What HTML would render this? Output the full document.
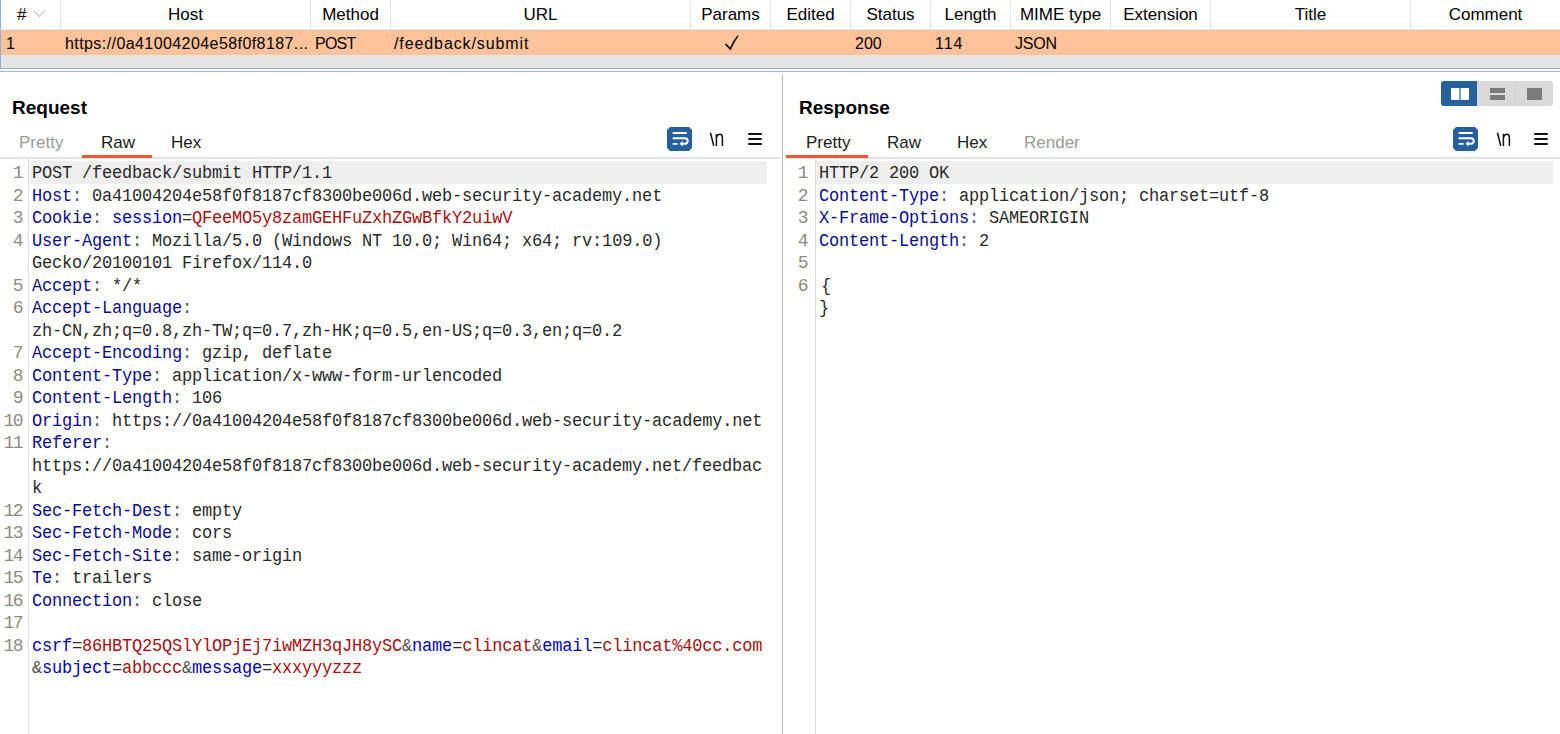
<!DOCTYPE html>
<html><head><meta charset="utf-8">
<style>
*{margin:0;padding:0;box-sizing:border-box}
html,body{width:1560px;height:734px;overflow:hidden;background:#fff;font-family:"Liberation Sans",sans-serif;color:#000}
.abs{position:absolute}
#tbl{position:absolute;left:0;top:0;width:1560px;height:69px;border-left:1px solid #8fb0d8;border-bottom:1px solid #8fb0d8}
.hd{position:absolute;top:0;height:30px;font-size:17px;line-height:29px;text-align:center;white-space:nowrap}
.sep{position:absolute;top:0;height:30px;width:1px;background:#e4e4e4}
#row{position:absolute;left:1px;top:30px;width:1559px;height:25px;background:#fec39a}
#gray{position:absolute;left:1px;top:55px;width:1559px;height:13px;background:#e5e5e5}
.cell{position:absolute;top:31px;height:25px;font-size:16px;line-height:25px;white-space:nowrap;letter-spacing:0}
#hline{position:absolute;left:0;top:71px;width:1560px;height:1px;background:#bab3b3}
#vdiv{position:absolute;left:782px;top:75px;width:1px;height:659px;background:#b8b1b1}
.title{position:absolute;font-size:19px;font-weight:bold;line-height:22px}
.tab{position:absolute;top:132px;font-size:17px;line-height:22px;color:#1c1c1c}
.tab.dis{color:#9a9a9a}
.uline{position:absolute;top:155px;height:3px;background:#f4572d}
.tabbar{position:absolute;top:157px;height:2px;background:#e1e4e7}
.gutline{position:absolute;top:159px;width:1px;height:575px;background:#dcdcdc}
.curline{position:absolute;top:161px;height:23px;background:#efefef}
.code{position:absolute;top:161px;font-family:"Liberation Mono",monospace;font-size:17px;letter-spacing:-0.2px;line-height:22.5px;color:#2a2a2a}
.code div{height:22.5px;padding-top:1.5px;white-space:pre;transform:scaleY(1.07);transform-origin:0 17px}
.ln{position:absolute;top:161px;font-family:"Liberation Mono",monospace;font-size:18px;letter-spacing:-0.8px;line-height:22.5px;color:#918a80;text-align:right;letter-spacing:-1.6px}
.ln div{height:22.5px;padding-top:1px;white-space:pre}
.k{color:#0c0c86}
.b{color:#0000c0}
.r{color:#a50f0f}
.g{color:#555}
.wrapic{position:absolute;top:127px;width:25px;height:24px;background:#26609c;clip-path:polygon(3px 0,22px 0,25px 3px,25px 21px,22px 24px,3px 24px,0 21px,0 3px)}
.nl{position:absolute;top:128px;font-size:17px;line-height:22px;color:#111}
.hamb{position:absolute;top:133px;width:14px;height:12px}
.hamb i{position:absolute;left:0;width:14px;height:2px;background:#111;border-radius:1px}
</style></head><body>

<div id="tbl"></div>
<div id="row"></div>
<div id="gray"></div>
<div class="abs" style="left:0;top:29px;width:1560px;height:1px;background:#e8e8e8"></div>
<!-- header separators -->
<div class="sep" style="left:60px"></div>
<div class="sep" style="left:310px"></div>
<div class="sep" style="left:390px"></div>
<div class="sep" style="left:690px"></div>
<div class="sep" style="left:770px"></div>
<div class="sep" style="left:850px"></div>
<div class="sep" style="left:930px"></div>
<div class="sep" style="left:1010px"></div>
<div class="sep" style="left:1110px"></div>
<div class="sep" style="left:1210px"></div>
<div class="sep" style="left:1410px"></div>
<!-- headers -->
<div class="hd" style="left:1px;width:59px;text-align:left;padding-left:16px">#<svg style="position:absolute;left:32px;top:10px" width="13" height="8" viewBox="0 0 13 8"><path d="M0.8 1 L6.2 6.4 L11.6 1" stroke="#a0a0a0" stroke-width="1" fill="none"/></svg></div>
<div class="hd" style="left:61px;width:249px">Host</div>
<div class="hd" style="left:311px;width:79px">Method</div>
<div class="hd" style="left:391px;width:299px">URL</div>
<div class="hd" style="left:691px;width:79px">Params</div>
<div class="hd" style="left:771px;width:79px">Edited</div>
<div class="hd" style="left:851px;width:79px">Status</div>
<div class="hd" style="left:931px;width:79px">Length</div>
<div class="hd" style="left:1011px;width:99px">MIME type</div>
<div class="hd" style="left:1111px;width:99px">Extension</div>
<div class="hd" style="left:1211px;width:199px">Title</div>
<div class="hd" style="left:1411px;width:149px">Comment</div>
<!-- row cells -->
<div class="cell" style="left:6px">1</div>
<div class="cell" style="left:65px;letter-spacing:0.42px">https://0a41004204e58f0f8187...</div>
<div class="cell" style="left:315px;letter-spacing:-0.75px">POST</div>
<div class="cell" style="left:394px;letter-spacing:0.9px">/feedback/submit</div>
<svg class="abs" style="left:724px;top:35px" width="16" height="17" viewBox="0 0 16 17"><path d="M0.8 9.4 L2.3 8.4 L6.1 12.6 Q9 5.2 13.6 0.3 L14.6 1.2 Q10.4 6.6 6.6 15.6 Z" fill="#111"/></svg>
<div class="cell" style="left:855px">200</div>
<div class="cell" style="left:935px;letter-spacing:1px">114</div>
<div class="cell" style="left:1015px;letter-spacing:-0.2px">JSON</div>

<div id="hline"></div>
<div id="vdiv"></div>

<!-- REQUEST PANE -->
<div class="title" style="left:12px;top:97px">Request</div>
<div class="tab dis" style="left:19px">Pretty</div>
<div class="tab" style="left:101px">Raw</div>
<div class="tab" style="left:171px">Hex</div>
<div class="tabbar" style="left:0;width:780px"></div>
<div class="uline" style="left:82px;width:70px"></div>

<div class="wrapic" style="left:667px"><svg width="25" height="24" viewBox="0 0 25 24"><path d="M6.4 6 H19" stroke="#fff" stroke-width="1.9" stroke-linecap="round"/><path d="M6.4 11.3 H18 A2.7 2.7 0 0 1 18 16.7 H14.5" stroke="#fff" stroke-width="1.9" fill="none" stroke-linecap="round"/><path d="M6.4 16.9 H9.8" stroke="#fff" stroke-width="1.9" stroke-linecap="round"/><path d="M12.6 16.7 L15.6 14 L15.6 19.4 Z" fill="#fff"/></svg></div>
<svg class="abs" style="left:709px;top:131px" width="17" height="17" viewBox="0 0 17 17"><path d="M1.6 2.2 L4.6 14.2" stroke="#111" stroke-width="1.5" fill="none" stroke-linecap="round"/><path d="M7.4 14.4 V3.6 M7.4 6.5 Q8.5 3.3 10.6 3.3 Q13.4 3.3 13.4 7 V14.4" stroke="#111" stroke-width="1.5" fill="none" stroke-linecap="round"/></svg>
<div class="hamb" style="left:748px"><i style="top:0"></i><i style="top:5px"></i><i style="top:10px"></i></div>

<div class="gutline" style="left:28px"></div>
<div class="curline" style="left:30px;width:737px"></div>

<div class="ln" style="left:0;width:22px">
<div>1</div><div>2</div><div>3</div><div>4</div><div> </div><div>5</div><div>6</div><div> </div><div>7</div><div>8</div><div>9</div><div>10</div><div>11</div><div> </div><div> </div><div>12</div><div>13</div><div>14</div><div>15</div><div>16</div><div>17</div><div>18</div>
</div>
<div class="code" style="left:32px">
<div>POST /feedback/submit HTTP/1.1</div>
<div><span class="k">Host</span><span class="g">:</span> 0a41004204e58f0f8187cf8300be006d.web-security-academy.net</div>
<div><span class="k">Cookie</span><span class="g">:</span> <span class="b">session</span>=<span class="r">QFeeMO5y8zamGEHFuZxhZGwBfkY2uiwV</span></div>
<div><span class="k">User-Agent</span><span class="g">:</span> Mozilla/5.0 (Windows NT 10.0; Win64; x64; rv:109.0)</div>
<div>Gecko/20100101 Firefox/114.0</div>
<div><span class="k">Accept</span><span class="g">:</span> */*</div>
<div><span class="k">Accept-Language</span><span class="g">:</span></div>
<div>zh-CN,zh;q=0.8,zh-TW;q=0.7,zh-HK;q=0.5,en-US;q=0.3,en;q=0.2</div>
<div><span class="k">Accept-Encoding</span><span class="g">:</span> gzip, deflate</div>
<div><span class="k">Content-Type</span><span class="g">:</span> application/x-www-form-urlencoded</div>
<div><span class="k">Content-Length</span><span class="g">:</span> 106</div>
<div><span class="k">Origin</span><span class="g">:</span> https://0a41004204e58f0f8187cf8300be006d.web-security-academy.net</div>
<div><span class="k">Referer</span><span class="g">:</span></div>
<div>https://0a41004204e58f0f8187cf8300be006d.web-security-academy.net/feedbac</div>
<div>k</div>
<div><span class="k">Sec-Fetch-Dest</span><span class="g">:</span> empty</div>
<div><span class="k">Sec-Fetch-Mode</span><span class="g">:</span> cors</div>
<div><span class="k">Sec-Fetch-Site</span><span class="g">:</span> same-origin</div>
<div><span class="k">Te</span><span class="g">:</span> trailers</div>
<div><span class="k">Connection</span><span class="g">:</span> close</div>
<div> </div>
<div><span class="b">csrf</span>=<span class="r">86HBTQ25QSlYlOPjEj7iwMZH3qJH8ySC</span><span class="g">&amp;</span><span class="b">name</span>=<span class="r">clincat</span><span class="g">&amp;</span><span class="b">email</span>=<span class="r">clincat%40cc.com</span></div>
<div><span class="g">&amp;</span><span class="b">subject</span>=<span class="r">abbccc</span><span class="g">&amp;</span><span class="b">message</span>=<span class="r">xxxyyyzzz</span></div>
</div>

<!-- RESPONSE PANE -->
<div class="title" style="left:799px;top:97px">Response</div>
<div class="tab" style="left:806px">Pretty</div>
<div class="tab" style="left:887px">Raw</div>
<div class="tab" style="left:957px">Hex</div>
<div class="tab dis" style="left:1024px">Render</div>
<div class="tabbar" style="left:786px;width:774px"></div>
<div class="uline" style="left:786px;width:82px"></div>

<!-- layout toggles -->
<div class="abs" style="left:1441px;top:81px;width:112px;height:25px;background:#dadada;border-radius:3px;overflow:hidden">
  <div class="abs" style="left:0;top:0;width:36px;height:25px;background:#26619c"></div>
  <div class="abs" style="left:10px;top:7px;width:8px;height:12px;background:#fff"></div>
  <div class="abs" style="left:20px;top:7px;width:8px;height:12px;background:#fff"></div>
  <div class="abs" style="left:18px;top:7px;width:2px;height:12px;background:#7b9dc6"></div>
  <div class="abs" style="left:49px;top:7px;width:15px;height:5px;background:#7b7b7b"></div>
  <div class="abs" style="left:49px;top:14px;width:15px;height:5px;background:#7b7b7b"></div>
  <div class="abs" style="left:74px;top:0;width:1px;height:25px;background:#cfcfcf"></div>
  <div class="abs" style="left:86px;top:7px;width:15px;height:12px;background:#7b7b7b"></div>
</div>

<div class="wrapic" style="left:1453px"><svg width="25" height="24" viewBox="0 0 25 24"><path d="M6.4 6 H19" stroke="#fff" stroke-width="1.9" stroke-linecap="round"/><path d="M6.4 11.3 H18 A2.7 2.7 0 0 1 18 16.7 H14.5" stroke="#fff" stroke-width="1.9" fill="none" stroke-linecap="round"/><path d="M6.4 16.9 H9.8" stroke="#fff" stroke-width="1.9" stroke-linecap="round"/><path d="M12.6 16.7 L15.6 14 L15.6 19.4 Z" fill="#fff"/></svg></div>
<svg class="abs" style="left:1496px;top:131px" width="17" height="17" viewBox="0 0 17 17"><path d="M1.6 2.2 L4.6 14.2" stroke="#111" stroke-width="1.5" fill="none" stroke-linecap="round"/><path d="M7.4 14.4 V3.6 M7.4 6.5 Q8.5 3.3 10.6 3.3 Q13.4 3.3 13.4 7 V14.4" stroke="#111" stroke-width="1.5" fill="none" stroke-linecap="round"/></svg>
<div class="hamb" style="left:1534px"><i style="top:0"></i><i style="top:5px"></i><i style="top:10px"></i></div>

<div class="gutline" style="left:815px"></div>
<div class="curline" style="left:816px;width:737px"></div>

<div class="ln" style="left:786px;width:21px">
<div>1</div><div>2</div><div>3</div><div>4</div><div>5</div><div>6</div>
</div>
<div class="code" style="left:819px">
<div>HTTP/2 200 OK</div>
<div><span class="k">Content-Type</span><span class="g">:</span> application/json; charset=utf-8</div>
<div><span class="k">X-Frame-Options</span><span class="g">:</span> SAMEORIGIN</div>
<div><span class="k">Content-Length</span><span class="g">:</span> 2</div>
<div> </div>
<div><span style="position:relative;left:2px">{</span></div>
<div>}</div>
</div>

</body></html>
